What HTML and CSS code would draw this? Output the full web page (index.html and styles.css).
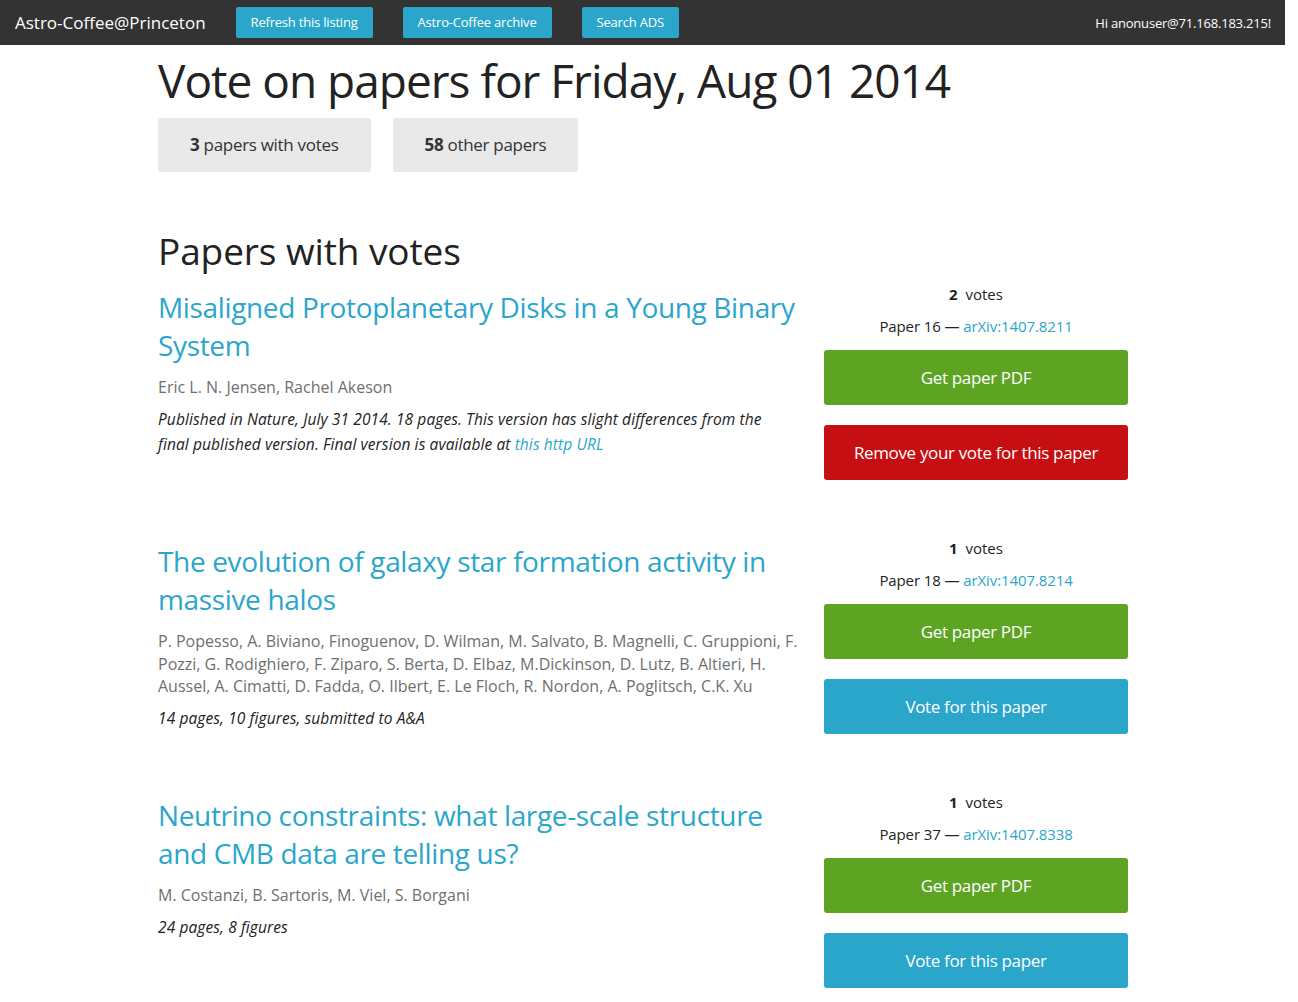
FILE: index.html
```html
<!DOCTYPE html>
<html>
<head>
<meta charset="utf-8">
<link rel="stylesheet" href="styles.css">
</head>
<body>
<nav class="topbar">
  <a class="brand">Astro-Coffee@Princeton</a>
  <ul class="nav-buttons">
    <li><a class="nav-btn">Refresh this listing</a></li>
    <li><a class="nav-btn">Astro-Coffee archive</a></li>
    <li><a class="nav-btn">Search ADS</a></li>
  </ul>
  <span class="greeting">Hi anonuser@71.168.183.215!</span>
</nav>

<main class="container">
  <h1 class="page-title">Vote on papers for Friday, Aug 01 2014</h1>
  <div class="tabs">
    <a class="tab"><strong>3</strong> papers with votes</a>
    <a class="tab"><strong>58</strong> other papers</a>
  </div>

  <h2 class="section-title">Papers with votes</h2>

  <article class="paper">
    <div class="paper-main">
      <h3 class="paper-title"><a>Misaligned Protoplanetary Disks in a Young Binary System</a></h3>
      <p class="authors">Eric L. N. Jensen, Rachel Akeson</p>
      <p class="comments">Published in Nature, July 31 2014. 18 pages. This version has slight differences from the final published version. Final version is available at <a class="link">this http URL</a></p>
    </div>
    <div class="paper-side">
      <p class="votes"><strong>2</strong> votes</p>
      <p class="paper-id">Paper 16 — <a class="link">arXiv:1407.8211</a></p>
      <a class="btn btn-green">Get paper PDF</a>
      <a class="btn btn-red">Remove your vote for this paper</a>
    </div>
  </article>

  <article class="paper">
    <div class="paper-main">
      <h3 class="paper-title"><a>The evolution of galaxy star formation activity in massive halos</a></h3>
      <p class="authors">P. Popesso, A. Biviano, Finoguenov, D. Wilman, M. Salvato, B. Magnelli, C. Gruppioni, F. Pozzi, G. Rodighiero, F. Ziparo, S. Berta, D. Elbaz, M.Dickinson, D. Lutz, B. Altieri, H. Aussel, A. Cimatti, D. Fadda, O. Ilbert, E. Le Floch, R. Nordon, A. Poglitsch, C.K. Xu</p>
      <p class="comments">14 pages, 10 figures, submitted to A&amp;A</p>
    </div>
    <div class="paper-side">
      <p class="votes"><strong>1</strong> votes</p>
      <p class="paper-id">Paper 18 — <a class="link">arXiv:1407.8214</a></p>
      <a class="btn btn-green">Get paper PDF</a>
      <a class="btn btn-blue">Vote for this paper</a>
    </div>
  </article>

  <article class="paper">
    <div class="paper-main">
      <h3 class="paper-title"><a>Neutrino constraints: what large-scale structure and CMB data are telling us?</a></h3>
      <p class="authors">M. Costanzi, B. Sartoris, M. Viel, S. Borgani</p>
      <p class="comments">24 pages, 8 figures</p>
    </div>
    <div class="paper-side">
      <p class="votes"><strong>1</strong> votes</p>
      <p class="paper-id">Paper 37 — <a class="link">arXiv:1407.8338</a></p>
      <a class="btn btn-green">Get paper PDF</a>
      <a class="btn btn-blue">Vote for this paper</a>
    </div>
  </article>
</main>
</body>
</html>
```

FILE: styles.css
```css
* { box-sizing: border-box; }
html, body { margin: 0; padding: 0; }
body {
  font-family: "Open Sans", "Noto Sans", sans-serif;
  color: #222;
  background: #fff;
}
a { text-decoration: none; }

.topbar {
  height: 45px;
  background: #333;
  display: flex;
  align-items: center;
  padding: 0 14px 0 15px;
  width: 1285px;
}
.brand {
  color: #fff;
  font-size: 17px;
  margin-right: 30px;
}
.nav-buttons {
  list-style: none;
  margin: 0;
  padding: 0;
  display: flex;
  gap: 30px;
}
.nav-btn {
  display: block;
  background: #2ba6cb;
  color: #fff;
  font-size: 13px;
  letter-spacing: -0.2px;
  height: 31px;
  line-height: 31px;
  padding: 0 15px;
  border-radius: 2px;
}
.greeting {
  margin-left: auto;
  color: #fff;
  font-size: 13px;
  letter-spacing: -0.2px;
}

.container {
  width: 970px;
  margin: 0 0 0 158px;
}
.page-title {
  font-size: 46px;
  font-weight: 400;
  letter-spacing: -1px;
  line-height: 60px;
  margin: 5px 0 0;
  color: #222;
}
.tabs {
  display: flex;
  gap: 22px;
  margin-top: 8px;
}
.tab {
  display: block;
  background: #e9e9e9;
  color: #333;
  font-size: 17px;
  letter-spacing: -0.3px;
  height: 54px;
  line-height: 54px;
  padding: 0 32px;
  border-radius: 3px;
}
.tab strong { font-weight: 700; }

.section-title {
  font-size: 37px;
  font-weight: 400;
  letter-spacing: -0.1px;
  line-height: 50px;
  margin: 54px 0 0;
  color: #222;
}

.paper {
  display: grid;
  grid-template-columns: 1fr 304px;
  column-gap: 20px;
  margin-top: 8px;
  margin-bottom: 58px;
}
.paper-main { padding-top: 4px; }
.paper-title {
  font-size: 28px;
  font-weight: 400;
  letter-spacing: -0.35px;
  line-height: 38px;
  margin: 0;
}
.paper-title a { color: #2ba6cb; }
.authors {
  font-size: 16px;
  line-height: 22.5px;
  color: #6f6f6f;
  margin: 12px 0 0;
}
.comments {
  font-size: 15.5px;
  font-style: italic;
  letter-spacing: 0.1px;
  line-height: 25px;
  margin: 8px 0 0;
  max-width: 630px;
  color: #222;
}
.link { color: #2ba6cb; }

.paper-side {
  display: flex;
  flex-direction: column;
  align-items: stretch;
  text-align: center;
}
.votes, .paper-id {
  font-size: 15px;
  line-height: 22px;
  margin: 0;
  color: #222;
}
.votes { margin-top: -1px; }
.votes strong { font-weight: 700; margin-right: 4px; }
.paper-id { margin-top: 10px; margin-bottom: 13px; letter-spacing: -0.1px; }
.btn {
  display: block;
  height: 55px;
  line-height: 55px;
  font-size: 17px;
  letter-spacing: -0.35px;
  color: #fff;
  border-radius: 3px;
  text-align: center;
}
.btn + .btn { margin-top: 20px; }
.btn-green { background: #5da423; }
.btn-red { background: #c60f13; }
.btn-blue { background: #2ba6cb; }
```
